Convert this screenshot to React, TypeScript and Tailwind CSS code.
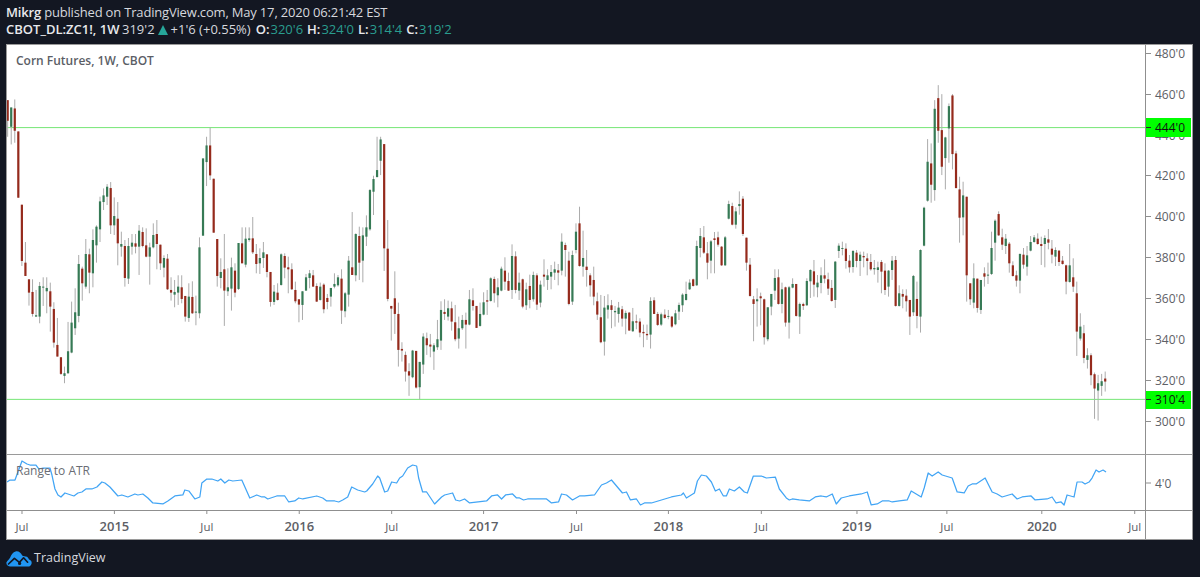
import React from "react";

type Seg = { y0: number; start: number; rows: string };

const segs: Seg[] = [
  {
    y0: 90,
    start: 0,
    rows: "r 30 92 30 140|g 52 110 52 163|r 55 122 28 158|r 124 323 124 323|r 344 513 344 528|r 518 558 456 558|r 568 608 568 647|r 606 672 568 680|g 676 680 600 680|g 588 680 576 700|g 590 593 562 648|g 594 604 562 670|r 604 650 578 725|r 657 758 637 773|r 765 800 684 800|r 802 852 802 855|g 850 858 830 880|g 784 850 696 852|g 698 788 635 790|g 667 715 595 735|g 522 678 495 697|r 536 580 530 632|g 492 590 447 596|r 493 548 476 610|g 450 550 418 592|g 410 466 406 518|g 334 418 320 456|g 316 336 295 360|g 290 320 282 345|r 294 406 276 432|g 378 406 322 435|r 386 460 336 526|g 462 470 425 500|r 468 564 450 590|g 468 566 444 582|g 458 470 432 494|r 460 470 432 490|g 422 470 405 555|r 426 468 412 472|r 466 500 415 502|g 472 500 458 584|g 435 472 400 475|r 432 462 390 538|r 464 520 464 540|g 504 533 496 562|r 506 598 492 600|r 600 608 562 632|g 606 614 570 652|g 590 608 556 645|r 592 627 556 640|r 618 680 618 695|g 620 684 580 696|r 621 670 574 672|g 665 668 617 706|g 472 670 442 685|g 205 437 205 437|g 166 216 140 288|r 166 256 112 270|r 266 428 266 428|r 447 558 447 590|g 546 564 505 595|r 538 602 432 708|g 592 604 535 618|g 532 596 503 662|r 542 608 520 622|g 459 597 459 600|r 460 520 412 520|g 446 524 412 532|g 445 450 412 455|r 445 487 381 492|r 492 522 462 550|g 504 520 475 552|g 487 504 456 534|r 493 546 493 562|r 546 636 546 650|g 605 636 585 645|r 608 630 580 632|g 493 585 490 587|r 498 533 490 565|r 532 538 500 610|r 538 598 520 600|r 600 634 575 640|r 628 644 628 697",
  },
  {
    y0: 120,
    start: 83,
    rows: "g 514 555 514 600|g 472 512 462 512|g 460 474 450 505|r 466 500 450 500|r 498 545 490 546|g 500 540 488 542|r 494 568 490 580|r 534 546 522 568|g 504 530 504 560|g 492 500 460 505|g 472 496 465 500|r 476 572 448 612|g 520 574 516 592|g 422 524 408 560|r 442 465 276 465|g 342 466 340 484|r 348 428 320 480|g 346 422 322 487|g 322 350 286 378|g 210 328 207 332|g 177 215 167 285|g 150 171 50 172|g 58 122 50 165|r 72 385 72 453|r 386 537 300 544|r 558 566 558 662|r 535 582 454 642|r 582 690 548 740|r 687 692 667 725|r 705 755 695 785|r 754 767 730 828|g 692 772 690 775|r 693 803 693 806|g 726 802 726 838|g 650 734 640 762|r 655 676 638 705|r 674 680 642 712|g 676 695 670 750|g 658 682 600 690|g 570 662 544 690|r 576 582 538 600|g 565 590 542 602|r 565 605 545 632|r 607 658 555 664|g 625 656 590 686|g 600 625 585 630|r 600 614 578 686|g 538 614 510 616|r 541 558 505 572|r 558 624 558 624|g 582 618 548 620|g 547 584 517 586|r 541 545 510 585|g 475 543 472 545|r 477 520 470 548|g 502 526 475 562|g 446 512 440 514|r 452 485 412 510|r 483 512 458 513|g 408 510 373 537|r 409 510 394 520|g 488 512 458 540|r 478 560 476 565|g 508 556 488 570|r 498 540 464 565|g 465 538 455 545|r 466 554 460 570|g 494 548 482 562|r 464 470 418 500|g 466 480 448 510|g 456 470 435 508|g 448 458 425 480|r 451 458 432 496|g 365 452 340 466|r 375 390 368 470|r 422 552 395 556|g 405 545 392 555|g 335 390 310 400|r 310 438 260 440|g 414 440 332 470|r 440 450 390 500|r 466 496 460 530|r 480 530 440 556|r 544 584 518 600",
  },
  {
    y0: 180,
    start: 167,
    rows: "r 412 487 345 490|g 383 485 348 527|g 376 389 343 416|r 376 390 360 445|g 393 397 378 440|g 383 402 366 428|r 388 416 378 440|g 399 416 392 463|r 398 452 396 452|g 424 454 384 456|r 424 428 404 448|r 425 458 415 472|r 456 460 434 502|r 462 466 434 480|g 363 464 352 506|r 361 402 352 402|r 402 435 396 438|g 403 434 398 438|r 404 414 388 416|g 408 410 390 418|r 410 440 408 444|g 400 433 390 436|g 375 395 368 420|g 344 376 340 396|g 342 360 305 362|g 308 328 298 330|r 298 318 296 320|g 198 316 182 318|g 168 204 144 232|r 172 218 138 222|r 220 248 186 298|g 184 242 180 280|r 175 180 156 280|r 172 194 155 200|r 200 256 198 258|g 172 256 168 258|g 72 116 62 118|r 78 134 68 136|g 94 134 82 146|g 72 78 34 104|r 56 162 48 168|r 173 248 173 272|r 254 348 234 350|r 358 372 348 484|g 358 364 325 440|r 349 355 338 436|r 358 472 356 494|g 382 478 382 484|g 342 380 342 406|g 294 332 268 360|r 292 372 268 374|g 328 372 308 400|r 322 428 320 440|g 322 428 318 476|g 312 323 295 325|r 312 408 312 410|g 372 410 368 462|r 372 378 368 390|g 303 376 295 378|g 270 304 268 354|r 274 314 240 350|g 308 322 285 352|g 286 309 262 340|r 286 296 238 310|r 298 326 278 345|r 324 363 300 365|g 245 360 243 384|g 197 213 190 234|g 204 206 185 226|r 206 243 190 266|r 242 262 225 278|g 213 261 210 278|r 218 243 210 262|g 224 243 215 288|r 228 232 215 262|r 235 243 220 286|r 246 268 222 272|g 264 268 240 284|g 262 270 245 308|r 246 275 240 340|r 272 330 250 345|g 272 320 270 350|g 242 270 228 300|r 240 378 228 380",
  },
  {
    y0: 80,
    start: 251,
    rows: "g 640 678 616 680|r 642 650 628 685|r 647 664 628 695|r 660 710 660 765|g 588 697 585 708|r 657 708 605 745|g 510 710 508 758|g 383 497 380 499|g 245 362 177 365|r 250 314 190 368|g 86 330 60 362|r 54 152 15 188|r 150 260 42 285|g 172 234 170 328|g 78 145 70 248|r 46 222 42 268|r 220 324 212 325|r 328 413 290 488|g 346 412 305 466|r 350 586 350 665|r 610 658 610 675|g 595 668 550 685|r 596 684 596 698|g 600 690 600 702|r 580 590 562 620|g 584 587 548 612|g 504 582 455 585|g 422 488 418 542|r 402 466 394 468|r 472 494 446 510|g 476 498 462 522|r 491 550 486 578|r 556 588 544 590|r 586 602 572 620|g 522 602 520 640|r 524 554 504 566|g 526 560 498 587|g 486 512 468 514|g 472 486 465 488|r 476 492 460 494|r 492 498 470 555|g 474 492 466 562|r 478 488 447 508|r 506 524 480 550|g 510 530 502 558|r 512 546 510 558|r 542 552 528 554|r 556 605 554 643|g 556 606 492 608|r 592 620 535 636|r 640 755 605 828|g 740 776 700 782|r 760 834 735 850|g 826 840 805 866|r 826 886 820 916|r 883 926 878 1017|g 910 932 885 1022|g 904 918 882 948|r 896 905 875 935",
  },
];

const candles = segs.flatMap((s) =>
  s.rows.split("|").map((row, i) => {
    const [c, t, b, h, l] = row.split(" ");
    const to = (v: string) => s.y0 + Number(v) / 3;
    return { i: s.start + i, c, t: to(t), b: to(b), h: to(h), l: to(l) };
  })
);

const atr =
  "7,482 10,480 15,480 22,461 27,464 30,465 36,465 39,469 43,468 50,468 52,475 55,489 58,495 61,497 65,493 74,496 78,493 82,492 86,489 92,489 97,487 102,482 105,483 110,487 118,496 122,495 128,497 135,494 138,495 143,494 148,498 153,503 163,504 168,501 175,496 183,495 185,490 189,491 195,499 200,497 202,483 207,479 212,479 218,481 221,479 225,483 229,480 233,481 242,480 250,498 257,495 262,497 265,497 268,499 277,496 285,496 289,502 295,501 299,498 303,499 317,496 323,498 327,501 335,501 339,502 343,500 348,497 352,487 358,490 365,492 367,491 373,484 378,476 380,478 385,492 388,491 392,482 397,483 400,478 403,476 408,468 413,465 417,466 419,478 423,492 427,492 435,504 442,497 445,495 453,493 456,500 460,501 465,499 470,503 487,501 492,496 498,495 502,499 506,495 513,494 517,498 520,498 524,500 528,499 547,499 552,503 559,502 562,494 567,495 573,500 580,496 585,496 595,495 602,485 607,483 612,480 623,493 627,492 631,500 637,499 641,505 645,503 652,503 672,497 682,495 684,493 687,498 695,493 698,481 702,475 707,476 712,482 716,491 720,489 724,496 727,496 730,489 735,491 740,487 745,492 748,493 754,476 762,476 767,478 776,477 780,489 787,498 790,500 793,499 800,500 810,501 816,497 822,496 827,497 833,494 837,504 842,498 850,496 862,494 868,492 872,505 878,504 883,501 890,501 893,502 900,501 908,500 912,491 922,497 925,488 929,473 933,476 939,472 943,475 953,478 958,492 965,493 969,486 973,484 977,484 986,478 991,488 993,492 998,494 1003,497 1013,494 1018,499 1023,497 1032,496 1036,500 1048,499 1053,497 1057,503 1062,502 1065,505 1068,495 1075,497 1078,482 1083,482 1086,484 1090,482 1093,478 1097,470 1100,472 1104,470 1107,472";

const priceTicks: [string, number][] = [
  ["480'0", 53.5],
  ["460'0", 94.5],
  ["420'0", 175.5],
  ["400'0", 216.5],
  ["380'0", 257.5],
  ["360'0", 298.5],
  ["340'0", 339.5],
  ["320'0", 380.5],
  ["300'0", 421.5],
];

const timeLabels: [string, number, boolean][] = [
  ["Jul", 22, false],
  ["2015", 114.5, true],
  ["Jul", 207, false],
  ["2016", 299.5, true],
  ["Jul", 392, false],
  ["2017", 484, true],
  ["Jul", 577, false],
  ["2018", 669, true],
  ["Jul", 762, false],
  ["2019", 857.7, true],
  ["Jul", 947.7, false],
  ["2020", 1042.7, true],
  ["Jul", 1135.7, false],
];

const LEVEL = "#74e674";
const AXIS = "#8f8f8f";
const LABEL = "#5d6066";
const font = "'Open Sans','Noto Sans',sans-serif";

function PricePane() {
  return (
    <svg viewBox="7 45 1139 409" className="block w-full h-full">
      <line x1="7" x2="1146" y1="127.5" y2="127.5" stroke={LEVEL} strokeWidth="1" />
      <line x1="7" x2="1146" y1="399.5" y2="399.5" stroke={LEVEL} strokeWidth="1" />
      {candles.map((d) => {
        const x = 7.67 + d.i * 3.555;
        return (
          <g key={d.i}>
            <line x1={x} x2={x} y1={d.h} y2={d.l} stroke="#ababab" strokeWidth="1" />
            <rect
              x={x - 1.1}
              y={d.t}
              width="2.2"
              height={Math.max(d.b - d.t, 1)}
              fill={d.c === "r" ? "#952a1c" : "#367a55"}
            />
          </g>
        );
      })}
    </svg>
  );
}

function PriceAxis() {
  return (
    <svg viewBox="1146 45 46 409" className="block w-full h-full" style={{ fontFamily: font }}>
      {priceTicks.map(([t, y]) => (
        <g key={t}>
          <line x1="1146" x2="1151" y1={y} y2={y} stroke={AXIS} />
          <text x="1155" y={y + 4.5} fontSize="12" fill={LABEL}>
            {t}
          </text>
        </g>
      ))}
      <text x="1155" y="140" fontSize="12" fill={LABEL}>
        440'0
      </text>
      <rect x="1146" y="118" width="45" height="19" fill="#00ff00" />
      <line x1="1146" x2="1151" y1="127.5" y2="127.5" stroke="#222" />
      <text x="1155" y="132" fontSize="12" fill="#111">
        444'0
      </text>
      <rect x="1146" y="391" width="45" height="18" fill="#00ff00" />
      <line x1="1146" x2="1151" y1="399.5" y2="399.5" stroke="#222" />
      <text x="1155" y="404" fontSize="12" fill="#111">
        310'4
      </text>
    </svg>
  );
}

function AtrPane() {
  return (
    <svg viewBox="7 455 1139 55" className="block w-full h-full">
      <polyline points={atr} fill="none" stroke="#42a5f5" strokeWidth="1.25" strokeLinejoin="round" />
    </svg>
  );
}

function AtrAxis() {
  return (
    <svg viewBox="1146 455 46 55" className="block w-full h-full" style={{ fontFamily: font }}>
      <line x1="1146" x2="1151" y1="483" y2="483" stroke={AXIS} />
      <text x="1155" y="487.5" fontSize="12" fill={LABEL}>
        4'0
      </text>
    </svg>
  );
}

function TimeAxis() {
  return (
    <svg viewBox="7 511 1139 28" className="block w-full h-full" style={{ fontFamily: font }}>
      {timeLabels.map(([t, x, bold]) => (
        <g key={x}>
          <line x1={x} x2={x} y1="511" y2="514" stroke={AXIS} />
          <text
            x={x}
            y="531"
            textAnchor="middle"
            fontSize={bold ? 13 : 11.5}
            fontWeight={bold ? 600 : 400}
            fill={LABEL}
          >
            {t}
          </text>
        </g>
      ))}
    </svg>
  );
}

function Logo() {
  return (
    <svg viewBox="0 0 26 16" className="w-[26px] h-[16px] block">
      <path
        d="M0.5 11.2 C1.5 9.6 3.2 8.6 4.2 6.6 C5.2 3.6 7 1 9.6 0.4 C12.6 -0.2 14.8 1.6 16.2 4.4 C17.2 5.4 19.4 4.8 21 5.8 C22.2 6.6 22.6 7.8 23 8.4 C24.8 8.8 26 10.4 25.6 12.4 C25.2 14.4 23.8 15.6 22 15.6 L4.4 15.6 C2 15.6 -0.2 13.6 0.5 11.2 Z"
        fill="#2196f3"
      />
      <path
        d="M2.5 13 L8.4 7.4 L13.4 11.4 L17.6 6.8 L21.6 11.2"
        fill="none"
        stroke="#131722"
        strokeWidth="1.7"
        strokeLinejoin="round"
        strokeLinecap="round"
      />
      <circle cx="13.6" cy="12.4" r="1.6" fill="#131722" />
    </svg>
  );
}

export default function App() {
  return (
    <div
      className="w-[1200px] h-[577px] bg-[#131722] flex flex-col overflow-hidden text-[#d6d8de]"
      style={{ fontFamily: font }}
    >
      <div className="h-[44px] px-[6px] pt-[4px] text-[13px] leading-[17px] shrink-0">
        <div className="whitespace-nowrap tracking-[-0.18px]">
          <span className="font-semibold text-[#e8e9ec]">Mikrg</span> published on TradingView.com, May 17, 2020 06:21:42 EST
        </div>
        <div className="whitespace-nowrap flex items-center">
          <span className="font-semibold text-[#e8e9ec] w-[116px]">CBOT_DL:ZC1!, 1W</span>
          <span>319'2</span>
          <svg viewBox="0 0 10 10" className="w-[10px] h-[10px] mx-[3px]">
            <path d="M5 0 L10 10 L0 10 Z" fill="#26a69a" />
          </svg>
          <span className="mr-[5px]">+1'6 (+0.55%)</span>
          <span className="font-semibold text-[#e8e9ec] mr-[1px]">O:</span>
          <span className="mr-[4px] text-[#2a9d8f]">320'6</span>
          <span className="font-semibold text-[#e8e9ec] mr-[1px]">H:</span>
          <span className="mr-[4px] text-[#2a9d8f]">324'0</span>
          <span className="font-semibold text-[#e8e9ec] mr-[1px]">L:</span>
          <span className="mr-[4px] text-[#2a9d8f]">314'4</span>
          <span className="font-semibold text-[#e8e9ec] mr-[1px]">C:</span>
          <span className="text-[#2a9d8f]">319'2</span>
        </div>
      </div>

      <div className="ml-[6px] w-[1187px] h-[496px] shrink-0 bg-white border border-[#9a9a9a] grid grid-cols-[1139px_46px] grid-rows-[409px_1px_55px_1px_28px]">
        <div className="relative border-r border-[#8f8f8f]">
          <PricePane />
          <div className="absolute left-[9px] top-[8px] text-[12px] font-semibold text-[#5b5e66] leading-[16px]">
            Corn Futures, 1W, CBOT
          </div>
        </div>
        <div>
          <PriceAxis />
        </div>
        <div className="col-span-2 bg-[#9a9a9a]" />
        <div className="relative border-r border-[#8f8f8f]">
          <AtrPane />
          <div className="absolute left-[9px] top-[8px] text-[12px] text-[#6a6d74] leading-[16px]">Range to ATR</div>
        </div>
        <div>
          <AtrAxis />
        </div>
        <div className="col-span-2 bg-[#8f8f8f]" />
        <div className="border-r border-[#8f8f8f]">
          <TimeAxis />
        </div>
        <div />
      </div>

      <div className="flex items-center gap-[2px] pl-[6px] flex-1">
        <Logo />
        <span className="text-[12.5px] text-[#d6d8de]">TradingView</span>
      </div>
    </div>
  );
}
